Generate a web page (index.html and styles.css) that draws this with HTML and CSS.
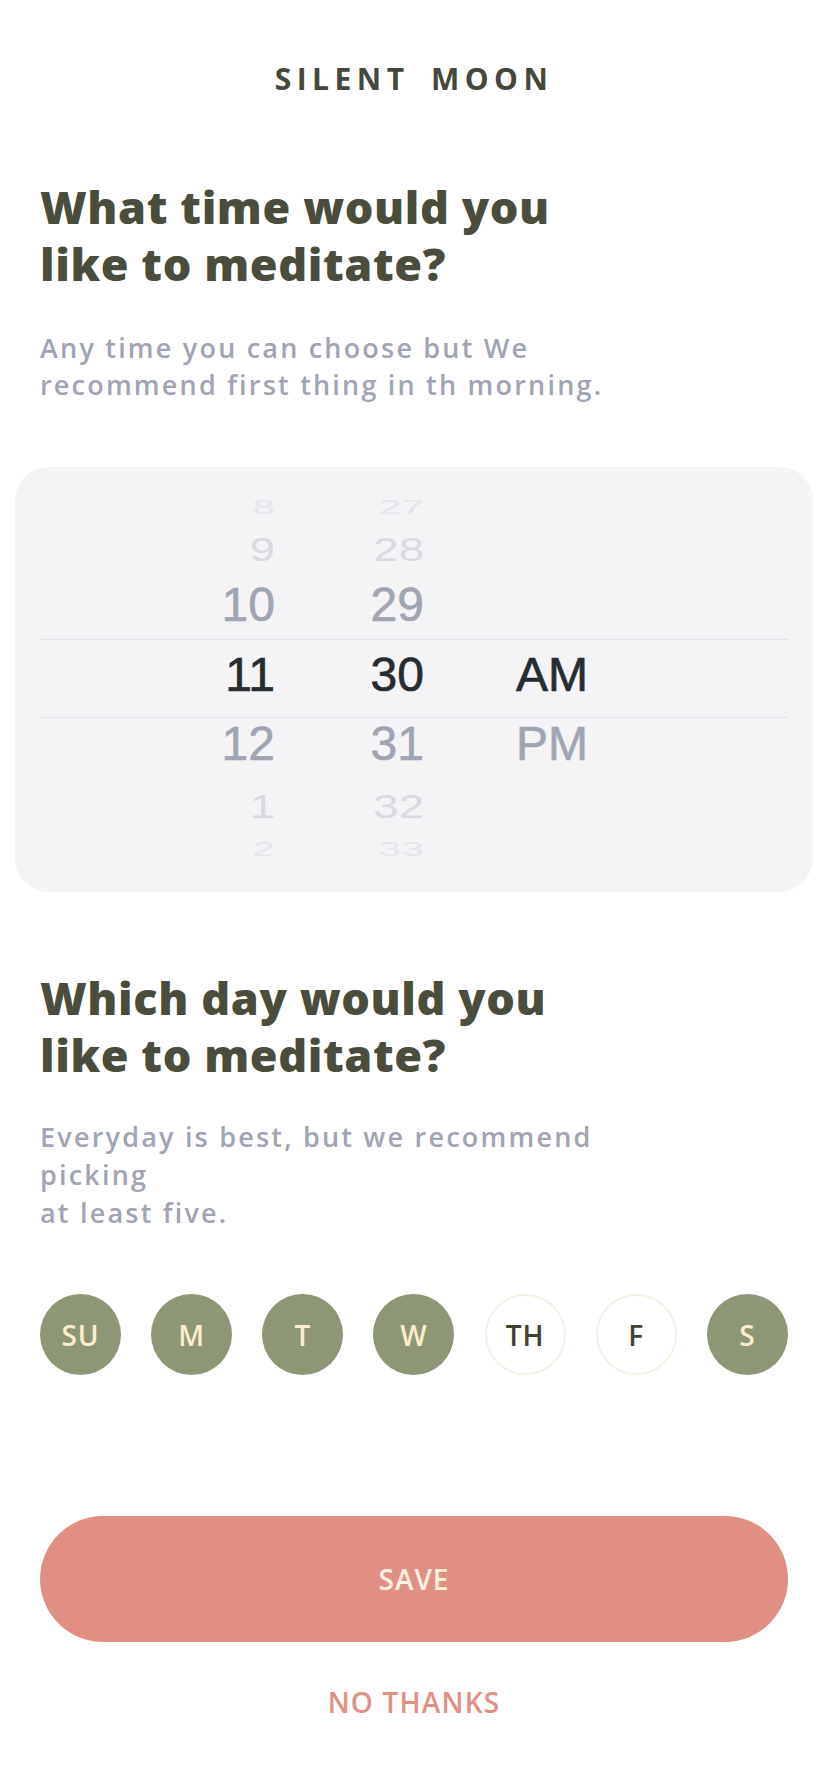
FILE: index.html
```html
<!DOCTYPE html>
<html lang="en">
<head>
<meta charset="utf-8">
<title>Silent Moon – Reminders</title>
<link rel="stylesheet" href="styles.css">
</head>
<body>
<main class="screen">
  <header class="brand">SILENT MOON</header>

  <section class="question">
    <h1 class="q-title">What time would you<br>like to meditate?</h1>
    <p class="q-sub">Any time you can choose but We<br>recommend first thing in th morning.</p>
  </section>

  <div class="picker">
    <div class="row r-3 r-h42"><span class="cell hour">8</span><span class="cell min">27</span><span class="cell ap"></span></div>
    <div class="row r-2 r-h43"><span class="cell hour">9</span><span class="cell min">28</span><span class="cell ap"></span></div>
    <div class="row r-1 r-h68"><span class="cell hour">10</span><span class="cell min">29</span><span class="cell ap"></span></div>
    <div class="row r-sel"><span class="cell hour">11</span><span class="cell min">30</span><span class="cell ap">AM</span></div>
    <div class="row r-1 r-h52"><span class="cell hour">12</span><span class="cell min">31</span><span class="cell ap">PM</span></div>
    <div class="row r-2 r-h74"><span class="cell hour">1</span><span class="cell min">32</span><span class="cell ap"></span></div>
    <div class="row r-3 r-h10"><span class="cell hour">2</span><span class="cell min">33</span><span class="cell ap"></span></div>
  </div>

  <section class="question q-days">
    <h2 class="q-title">Which day would you<br>like to meditate?</h2>
    <p class="q-sub q-sub-days">Everyday is best, but we recommend<br>picking<br>at least five.</p>
  </section>

  <div class="days">
    <span class="day on">SU</span>
    <span class="day on">M</span>
    <span class="day on">T</span>
    <span class="day on">W</span>
    <span class="day off">TH</span>
    <span class="day off">F</span>
    <span class="day on">S</span>
  </div>

  <button class="save" type="button">SAVE</button>
  <div class="no-thanks">NO THANKS</div>
</main>
</body>
</html>
```

FILE: styles.css
```css
html, body {
  margin: 0;
  padding: 0;
  background: #ffffff;
}

body {
  font-family: "Open Sans", "Noto Sans", sans-serif;
}

.screen {
  width: 828px;
  box-sizing: border-box;
  padding: 61px 40px 0;
}

.brand {
  font-size: 30px;
  line-height: 36px;
  font-weight: 700;
  letter-spacing: 5.5px;
  word-spacing: 8px;
  text-align: center;
  color: #45473b;
}

.q-title {
  margin: 81px 0 0;
  font-size: 45px;
  line-height: 57px;
  font-weight: 800;
  letter-spacing: 0.6px;
  color: #4a4d3b;
}

.q-sub {
  margin: 37px 0 0;
  font-size: 27px;
  line-height: 37px;
  font-weight: 600;
  letter-spacing: 2.2px;
  color: #a1a4b2;
}

.q-sub-days {
  margin-top: 35px;
  line-height: 38px;
}

/* time picker */
.picker {
  margin: 64px -25px 0;
  padding: 19px 25px 38px;
  background: #f4f4f7;
  border-radius: 34px;
}

.row {
  display: grid;
  grid-template-columns: 235px 149px 1fr;
  align-items: center;
  font-family: "Liberation Sans", Arial, sans-serif;
  font-size: 48px;
}

.cell {
  display: block;
  white-space: nowrap;
}

.cell.hour,
.cell.min {
  text-align: right;
  transform-origin: right center;
}

.cell.ap {
  padding-left: 92px;
  transform-origin: left center;
}

.r-h42 { height: 42px; line-height: 42px; }
.r-h43 { height: 43px; line-height: 43px; }
.r-h68 { height: 68px; line-height: 68px; }
.r-h52 { height: 52px; line-height: 52px; }
.r-h74 { height: 74px; line-height: 74px; }
.r-h10 { height: 10px; line-height: 10px; }

.r-sel {
  border-top: 1px solid #e2e2e8;
  border-bottom: 1px solid #e2e2e8;
  height: 70px;
  line-height: 70px;
  padding-bottom: 7px;
  color: #272c31;
  -webkit-text-stroke: 0.7px #272c31;
}

.r-1 {
  color: #a1a4b2;
  -webkit-text-stroke: 0.6px #a1a4b2;
}

.r-2 { color: #d9dadf; }
.r-2 .cell { transform: scale(0.95, 0.71); }

.r-3 { color: #e5e5ea; }
.r-3 .cell { transform: scale(0.85, 0.42); }

/* days */
.q-days .q-title {
  margin-top: 77px;
}

.days {
  margin-top: 62px;
  display: flex;
  justify-content: space-between;
}

.day {
  width: 81px;
  height: 81px;
  border-radius: 50%;
  box-sizing: border-box;
  display: flex;
  align-items: center;
  justify-content: center;
  font-size: 28px;
  font-weight: 600;
  letter-spacing: 1px;
}

.day.on {
  background: #8e9775;
  color: #ffeccc;
}

.day.off {
  background: #ffffff;
  border: 2px solid #f6f0e2;
  color: #3f4136;
}

/* actions */
.save {
  display: flex;
  align-items: center;
  justify-content: center;
  width: 100%;
  height: 126px;
  margin-top: 141px;
  border: none;
  border-radius: 63px;
  background: #e28f83;
  color: #fff1e1;
  font-family: inherit;
  font-size: 28px;
  font-weight: 600;
  letter-spacing: 1px;
  padding: 0;
}

.no-thanks {
  margin-top: 42px;
  text-align: center;
  font-size: 28px;
  line-height: 36px;
  font-weight: 600;
  letter-spacing: 1.2px;
  color: #e28f83;
}
```
